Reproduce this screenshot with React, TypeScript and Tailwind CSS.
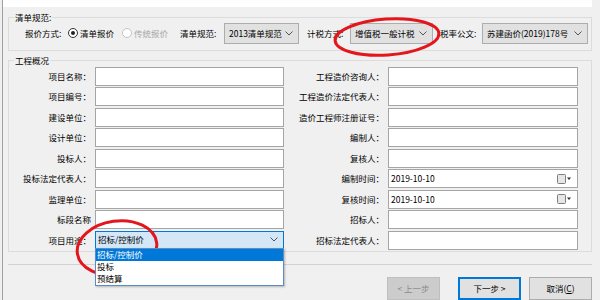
import { ReactNode } from 'react'

// project wizard: 清单规范 + 工程概况 form with red annotation marks
const leftRows = ['项目名称：', '项目编号：', '建设单位：', '设计单位：', '投标人：', '投标法定代表人：', '监理单位：', '标段名称', '项目用途：']
const rightRows = ['工程造价咨询人：', '工程造价法定代表人：', '造价工程师注册证号：', '编制人：', '复核人：', '编制时间：', '复核时间：', '招标人：', '招标法定代表人：']

function Chevron() {
  return (
    <svg width="8" height="5" viewBox="0 0 8 5" className="shrink-0">
      <path d="M0.5 0.5 L4 4 L7.5 0.5" fill="none" stroke="#555" strokeWidth="1" />
    </svg>
  )
}

function TopSelect({ value, className }: { value: string; className: string }) {
  return (
    <div className={`flex h-[21px] items-center justify-between border border-[#adadad] bg-[#e1e1e1] pl-[4px] pr-[5px] ${className}`}>
      <span className="whitespace-nowrap">{value}</span>
      <Chevron />
    </div>
  )
}

function Radio({ checked, label }: { checked?: boolean; label: string }) {
  return (
    <div className="flex items-center">
      <span className={`flex h-[10px] w-[10px] items-center justify-center rounded-full border bg-white ${checked ? 'border-[#333]' : 'border-[#c4c4c4]'}`}>
        {checked && <span className="h-[4px] w-[4px] rounded-full bg-[#222]" />}
      </span>
      <span className={`ml-[2px] ${checked ? 'text-black' : 'text-[#a6a6a6]'}`}>{label}</span>
    </div>
  )
}

function Input({ children }: { children?: ReactNode }) {
  return (
    <div className="flex h-[19px] w-full items-center border border-[#a5a5a5] bg-white pl-[2px]">
      {children}
    </div>
  )
}

function DateInput({ value }: { value: string }) {
  return (
    <Input>
      <span className="flex-1">{value}</span>
      <svg width="15" height="10" viewBox="0 0 15 10" className="mr-[5px]">
        <rect x="0.5" y="0.5" width="8" height="9" rx="1" fill="#e6e6e6" stroke="#7d7d7d" />
        <path d="M10 3.5 L14 3.5 L12 6 Z" fill="#333" />
      </svg>
    </Input>
  )
}

function PurposeSelect() {
  return (
    <div className="relative w-full">
      <div className="flex h-[18px] items-center justify-between border border-[#0078d7] bg-[#d4e7f7] pl-[2px] pr-[5px]">
        <span>招标/控制价</span>
        <Chevron />
      </div>
      {/* open dropdown list */}
      <div className="absolute left-0 top-[17px] z-10 w-full border border-[#5b8cc4] bg-white shadow-[1px_1px_2px_rgba(0,0,0,0.25)]">
        <div className="flex h-[12px] items-center bg-[#0078d7] pl-[1px] text-white">招标/控制价</div>
        <div className="flex h-[12px] items-center pl-[1px]">投标</div>
        <div className="flex h-[12px] items-center pl-[1px]">预结算</div>
      </div>
    </div>
  )
}

function GroupLabel({ children }: { children: ReactNode }) {
  return (
    <span className="absolute left-[5px] top-[-6px] bg-[#f0f0f0] px-[1px] leading-[11px]">{children}</span>
  )
}

export default function App() {
  return (
    <div className="relative h-[300px] w-[600px] overflow-hidden bg-[#f0f0f0] pl-[2px] font-['Noto_Sans_CJK_SC','Microsoft_YaHei',sans-serif] text-[8.5px] text-black">
      <div className="flex h-full flex-col border-l border-[#a0a0a0]">
        <div className="h-[7px] w-[589px] bg-white" />

        {/* 清单规范 */}
        <div className="relative ml-[5px] mt-[10px] h-[34px] w-[584px] border border-[#dcdcdc] pt-[5px]">
          <GroupLabel>清单规范:</GroupLabel>
          <div className="flex items-center pl-[16px]">
            <span className="w-[43px]">报价方式:</span>
            <div className="w-[54px]"><Radio checked label="清单报价" /></div>
            <div className="w-[58px]"><Radio label="传统报价" /></div>
            <span className="w-[44px]">清单规范:</span>
            <TopSelect value="2013清单规范" className="w-[75px]" />
            <span className="ml-[8px] w-[43px]">计税方式:</span>
            <TopSelect value="增值税一般计税" className="w-[83px]" />
            <span className="ml-[7px] w-[42px]">税率公文:</span>
            <TopSelect value="苏建函价(2019)178号" className="w-[106px]" />
          </div>
        </div>

        {/* 工程概况 */}
        <div className="relative ml-[5px] mt-[9px] h-[194px] w-[584px] border border-[#dcdcdc] pt-[6px]">
          <GroupLabel>工程概况</GroupLabel>
          <div className="flex flex-col gap-[1.5px]">
            {leftRows.map((l, i) => (
              <div key={l} className="flex h-[19px] items-center">
                <span className="w-[82px] whitespace-nowrap text-right">{l}</span>
                <div className="ml-[4px] w-[189px] self-start">
                  {i === 8 ? <PurposeSelect /> : <Input />}
                </div>
                <span className="w-[100px] whitespace-nowrap text-right">{rightRows[i]}</span>
                <div className="ml-[4px] w-[190px]">
                  {i === 5 || i === 6 ? <DateInput value="2019-10-10" /> : <Input />}
                </div>
              </div>
            ))}
          </div>
        </div>

        <div className="ml-[5px] mt-[12px] w-[584px] border-t border-[#d2d2d2]" />

        <div className="mt-[12px] flex justify-end pr-[8px]">
          <button className="mr-[18px] h-[23px] w-[53px] border border-[#bfbfbf] bg-[#cccccc] text-[#8a8a8a]">&lt; 上一步</button>
          <button className="h-[23px] w-[63px] border-2 border-[#0078d7] bg-[#e1e1e1]">下一步 &gt;</button>
          <button className="ml-[8px] h-[23px] w-[63px] border border-[#adadad] bg-[#e1e1e1]">
            取消(<span className="underline">C</span>)
          </button>
        </div>
      </div>

      {/* red annotation marks */}
      <svg className="pointer-events-none absolute left-0 top-0" width="600" height="300">
        <ellipse cx="387" cy="37" rx="52" ry="18" fill="none" stroke="#e3161d" strokeWidth="3" transform="rotate(-4 387 37)" />
        <ellipse cx="117" cy="248" rx="40" ry="27" fill="none" stroke="#e3161d" strokeWidth="3" transform="rotate(-8 117 248)" />
      </svg>
    </div>
  )
}
